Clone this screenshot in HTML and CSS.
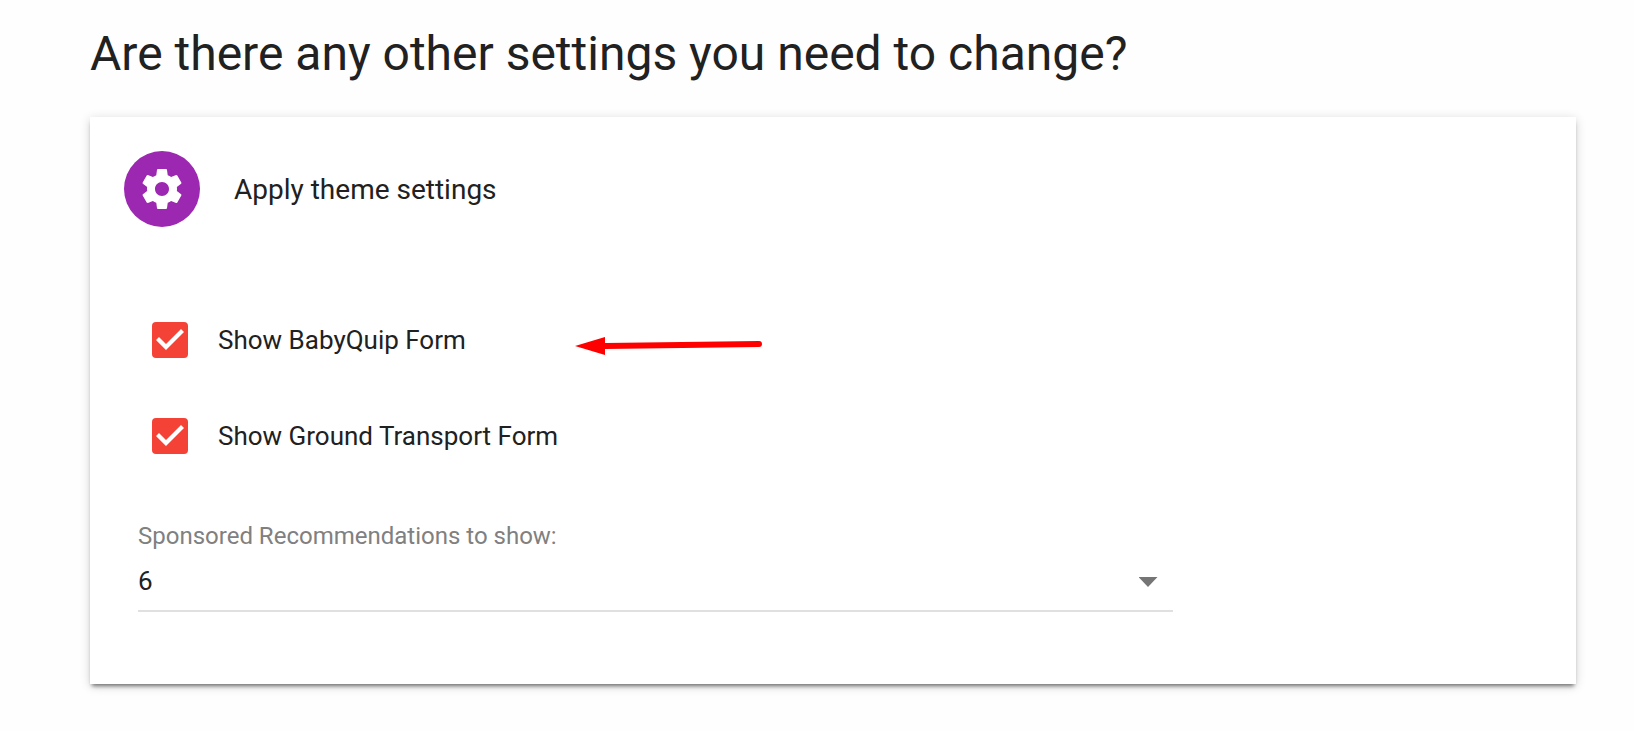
FILE: index.html
```html
<!DOCTYPE html>
<html lang="en">
<head>
  <meta charset="UTF-8" />
  <meta name="viewport" content="width=device-width, initial-scale=1" />
  <title>Theme settings</title>
  <link rel="stylesheet" href="styles.css">
</head>
<body>
  <main class="page">
    <h1>Are there any other settings you need to change?</h1>

    <section class="card">
      <header class="card-header">
        <div class="avatar">
          <svg viewBox="0 0 24 24" width="48" height="48" aria-hidden="true">
            <path fill="#fff" d="M19.43 12.98c.04-.32.07-.64.07-.98s-.03-.66-.07-.98l2.11-1.65c.19-.15.24-.42.12-.64l-2-3.46c-.12-.22-.39-.3-.61-.22l-2.49 1c-.52-.4-1.08-.73-1.69-.98l-.38-2.65C14.46 2.18 14.25 2 14 2h-4c-.25 0-.46.18-.49.42l-.38 2.65c-.61.25-1.17.59-1.69.98l-2.49-1c-.23-.09-.49 0-.61.22l-2 3.46c-.13.22-.07.49.12.64l2.11 1.65c-.04.32-.07.65-.07.98s.03.66.07.98l-2.11 1.65c-.19.15-.24.42-.12.64l2 3.46c.12.22.39.3.61.22l2.49-1c.52.4 1.08.73 1.69.98l.38 2.65c.03.24.24.42.49.42h4c.25 0 .46-.18.49-.42l.38-2.65c.61-.25 1.17-.59 1.69-.98l2.49 1c.23.09.49 0 .61-.22l2-3.46c.12-.22.07-.49-.12-.64l-2.11-1.65zM12 15.5c-1.93 0-3.5-1.57-3.5-3.5s1.57-3.5 3.5-3.5 3.5 1.57 3.5 3.5-1.57 3.5-3.5 3.5z"/>
          </svg>
        </div>
        <h2>Apply theme settings</h2>
      </header>

      <form class="card-content">
        <div class="check-row">
          <input type="checkbox" id="babyquip" checked>
          <label for="babyquip">Show BabyQuip Form</label>
          <svg class="arrow" viewBox="0 0 188 20" width="188" height="20" aria-hidden="true">
            <path d="M30 11L184 9" stroke="#f00" stroke-width="6" stroke-linecap="round"/>
            <path d="M0 11L30 2V20Z" fill="#f00"/>
          </svg>
        </div>
        <div class="check-row">
          <input type="checkbox" id="transport" checked>
          <label for="transport">Show Ground Transport Form</label>
        </div>

        <div class="field">
          <label for="recommendations">Sponsored Recommendations to show:</label>
          <div class="select-wrap">
            <select id="recommendations">
              <option>2</option>
              <option>4</option>
              <option selected>6</option>
              <option>8</option>
            </select>
          </div>
        </div>
      </form>
    </section>
  </main>
</body>
</html>
```
FILE: styles.css
```css
* {
  margin: 0;
  padding: 0;
  box-sizing: border-box;
}

body {
  background: #fefefe;
  color: #212121;
  font-family: Roboto, sans-serif;
}

.page {
  padding: 24px 58px 40px 90px;
}

h1 {
  font-size: 48px;
  font-weight: 400;
  line-height: 60px;
}

.card {
  margin-top: 33px;
  background: #fff;
  box-shadow: 0 2px 10px rgba(0, 0, 0, 0.16), 0 4px 4px -2px rgba(0, 0, 0, 0.5);
}

.card-header {
  display: flex;
  align-items: center;
  gap: 34px;
  padding: 34px 34px 0;
}

.avatar {
  display: flex;
  align-items: center;
  justify-content: center;
  width: 76px;
  height: 76px;
  border-radius: 50%;
  background: #9c27b0;
}

h2 {
  font-size: 28px;
  font-weight: 400;
}

.card-content {
  padding: 65px 48px 72px;
}

.check-row {
  display: flex;
  align-items: center;
  gap: 30px;
  height: 96px;
  padding-left: 14px;
  position: relative;
  font-size: 26px;
}

input[type="checkbox"] {
  appearance: none;
  width: 36px;
  height: 36px;
  border-radius: 4px;
  background: #f44336;
}

input[type="checkbox"]:checked::after {
  content: "";
  display: block;
  width: 36px;
  height: 36px;
  background: #fff;
  clip-path: polygon(4px 18px, 7px 15px, 14px 22px, 29px 7px, 32px 10px, 14px 28px);
}

/* hand-drawn pointer lying over the row */
.arrow {
  position: absolute;
  left: 437px;
  top: 43px;
  fill: none;
}

.field {
  width: calc(75% - 8px);
  margin-top: 36px;
}

.field label {
  display: block;
  color: #808080;
  font-size: 24px;
  line-height: 32px;
}

.select-wrap {
  position: relative;
  border-bottom: 2px solid #e0e0e0;
}

.select-wrap::after {
  content: "";
  position: absolute;
  right: 15px;
  top: 25px;
  width: 19px;
  height: 10px;
  background: #757575;
  clip-path: polygon(0 0, 100% 0, 50% 100%);
  pointer-events: none;
}

select {
  appearance: none;
  display: block;
  width: 100%;
  height: 58px;
  border: 0;
  background: none;
  color: #212121;
  font: 26px Roboto, sans-serif;
}
```
